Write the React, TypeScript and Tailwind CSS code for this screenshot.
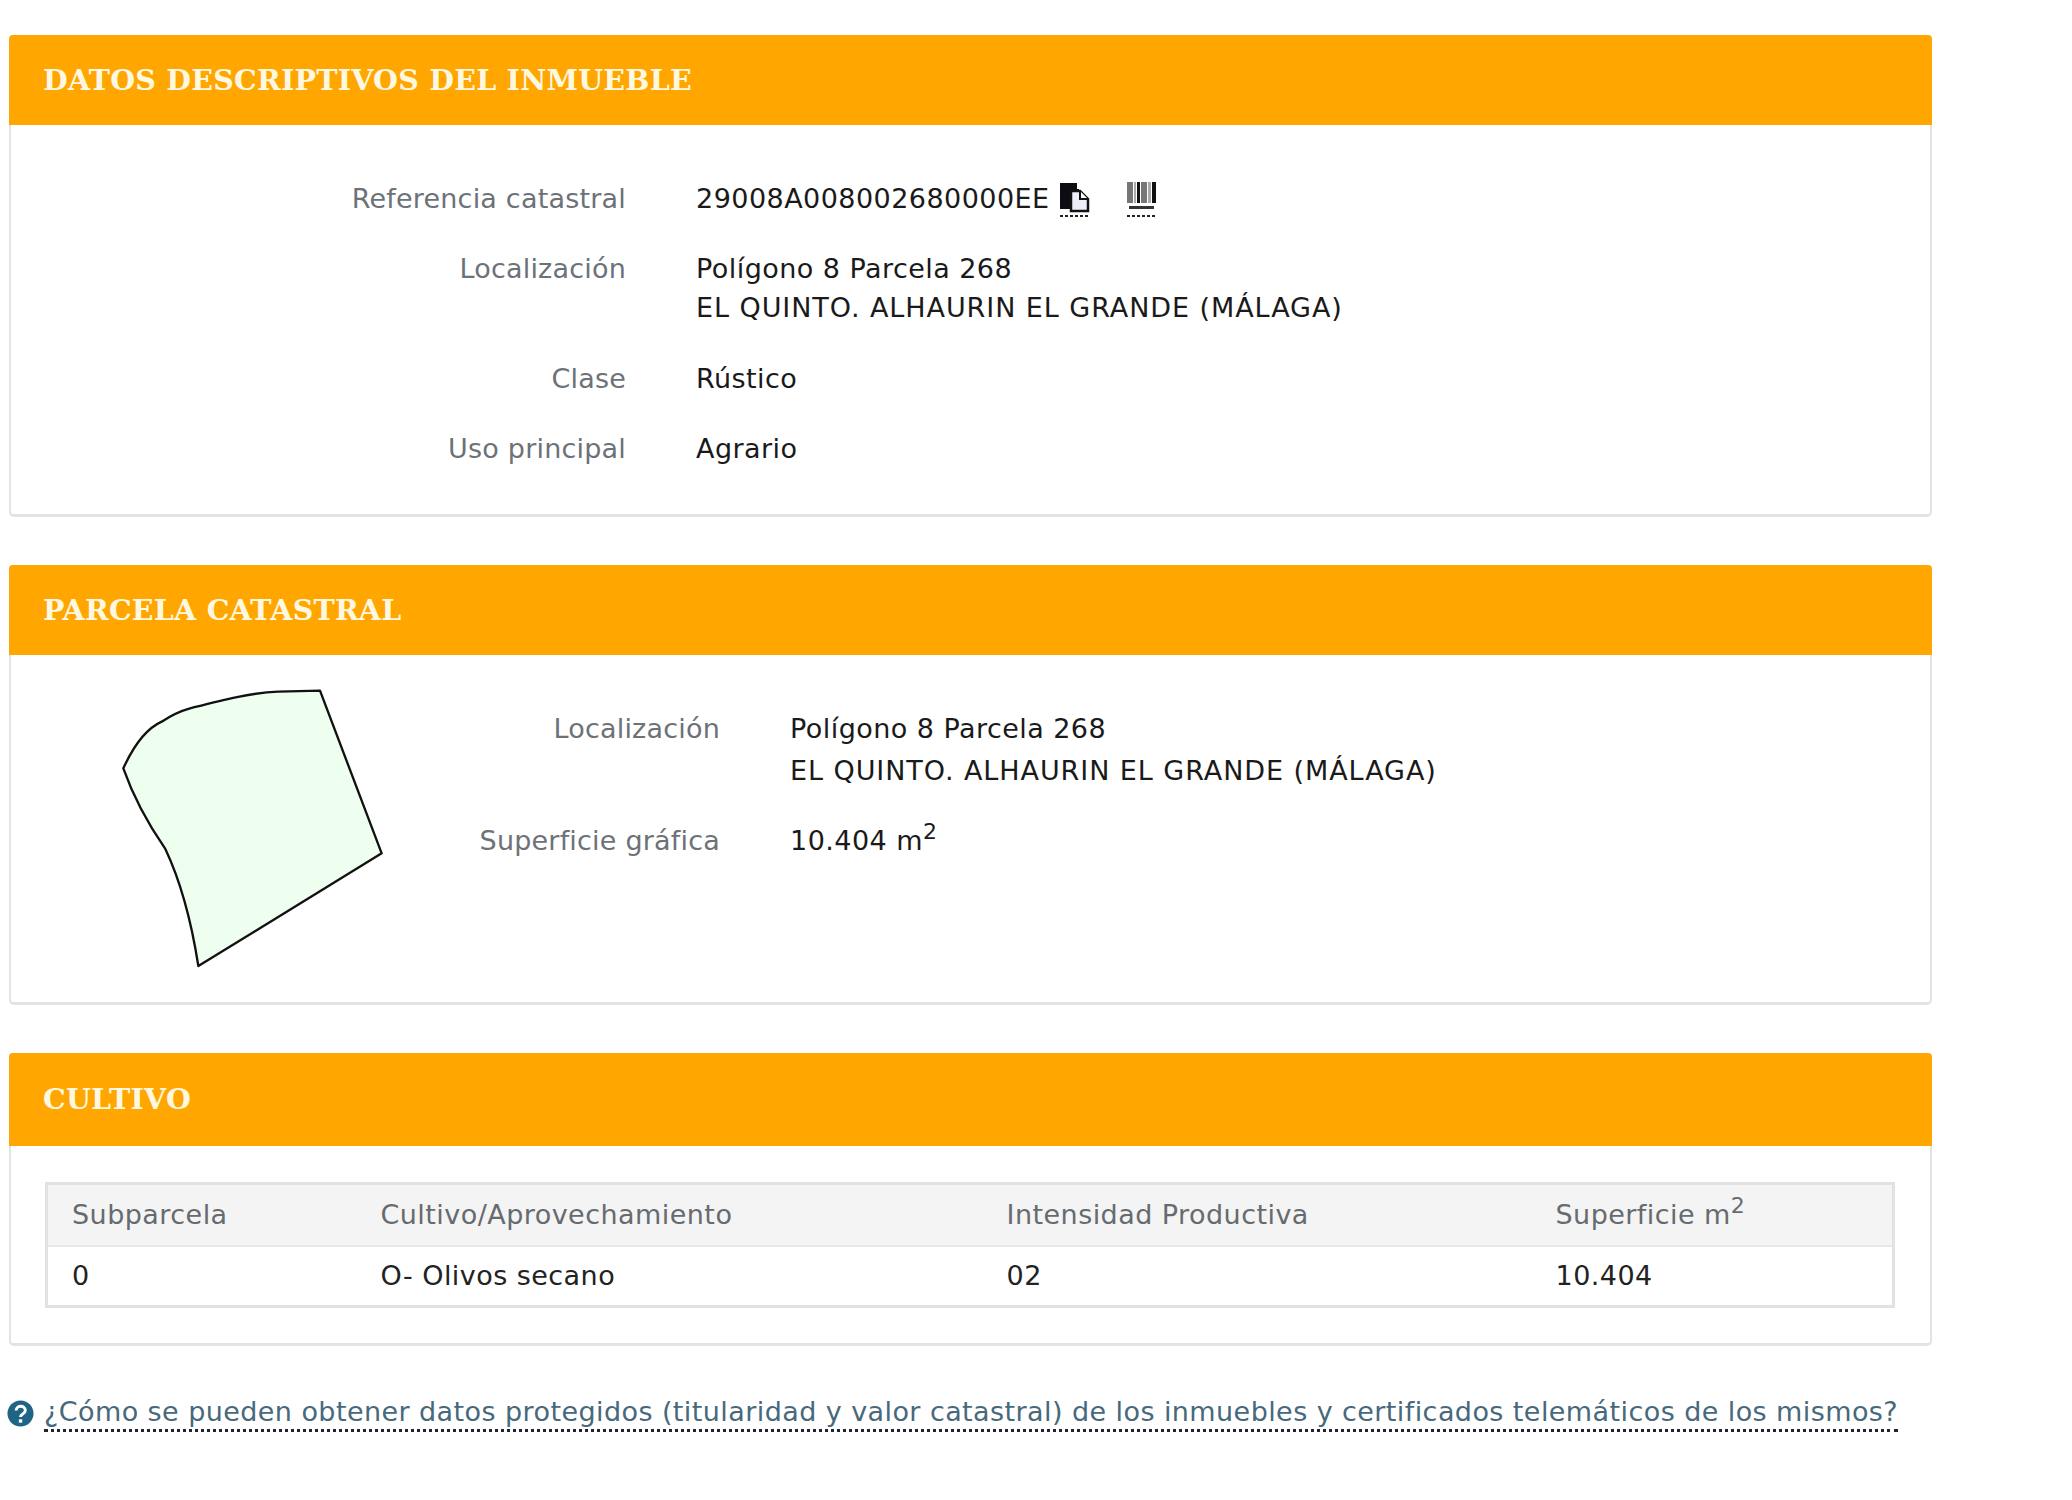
const font = { fontFamily: '"DejaVu Sans", sans-serif' };

function Header({ title, tall }: { title: string; tall?: boolean }) {
  return (
    <div className={`flex items-center rounded-t-[4px] bg-[#ffa700] pl-[34px] ${tall ? "h-[93px]" : "h-[90px]"}`}>
      <h2 className="text-[28.5px] font-bold leading-none tracking-[0.25px] text-[#fff8e0] [font-family:'DejaVu_Serif',serif]">{title}</h2>
    </div>
  );
}

function CopyIcon() {
  return (
    <svg width="32" height="36" viewBox="0 0 32 36" className="ml-[9px] mt-[3px]">
      <path d="M1 1h17v6h2l-0 20H1z" fill="#0c0c12" />
      <path d="M12 9h9l8 8v12H12z" fill="#eeeef8" stroke="#111" strokeWidth="2.5" />
      <path d="M21 9v8h8" fill="#fff" stroke="#111" strokeWidth="2" />
      <path d="M1 34h30" stroke="#222" strokeWidth="2" strokeDasharray="3 2" />
    </svg>
  );
}

function BarcodeIcon() {
  return (
    <svg width="32" height="36" viewBox="0 0 32 36" className="ml-[35px] mt-[3px]">
      <rect x="1" y="0" width="6" height="21" fill="#777" />
      <rect x="8" y="0" width="2" height="21" fill="#aaa" />
      <rect x="11" y="0" width="3" height="21" fill="#111" />
      <rect x="15" y="0" width="6" height="21" fill="#777" />
      <rect x="22" y="0" width="3" height="21" fill="#aaa" />
      <rect x="26" y="0" width="4" height="21" fill="#111" />
      <rect x="3" y="24" width="25" height="3" fill="#333" />
      <path d="M1 34h30" stroke="#222" strokeWidth="2" strokeDasharray="3 2" />
    </svg>
  );
}

function Row({ label, w, children, extra }: { label: string; w: string; children: React.ReactNode; extra?: string }) {
  return (
    <div className={`flex ${extra ?? ""}`}>
      <div className={`${w} shrink-0 text-right tracking-[0.2px] text-[#6c7278]`}>{label}</div>
      <div className="ml-[70px] tracking-[0.45px] text-[#1a1a1a]">{children}</div>
    </div>
  );
}

function Address() {
  return (
    <>
      Polígono 8 Parcela 268
      <br />
      <span className="tracking-[0.93px]">EL QUINTO. ALHAURIN EL GRANDE (MÁLAGA)</span>
    </>
  );
}

export default function App() {
  const head = "text-[#666b70]";
  return (
    <div className="min-h-[1500px] bg-white pl-[9px] pt-[35px] text-[27px]" style={font}>
      <div className="w-[1923px]">
        <section className="h-[482px] rounded-[5px] border-x-2 border-b-[3px] border-[#e3e3e3]">
          <div className="mx-[-2px]"><Header title="DATOS DESCRIPTIVOS DEL INMUEBLE" /></div>
          <div className="flex flex-col gap-[31px] pt-[54px] leading-[39px]">
            <Row label="Referencia catastral" w="w-[615px]">
              <div className="flex items-center">
                <span>29008A008002680000EE</span>
                <CopyIcon />
                <BarcodeIcon />
              </div>
            </Row>
            <Row label="Localización" w="w-[615px]">
              <Address />
            </Row>
            <Row label="Clase" w="w-[615px]" extra="mt-[1px]">Rústico</Row>
            <Row label="Uso principal" w="w-[615px]">Agrario</Row>
          </div>
        </section>

        <section className="mt-[48px] h-[440px] rounded-[5px] border-x-2 border-b-[3px] border-[#e3e3e3]">
          <div className="mx-[-2px]"><Header title="PARCELA CATASTRAL" /></div>
          <div className="flex">
            <svg width="320" height="320" viewBox="0 0 960 960" className="ml-[79px] mt-[15px] shrink-0">
              <path
                d="M690 62L875 550L325 888C305 760 275 640 225 535C180 470 130 380 100 295C125 240 160 180 215 155C245 135 275 122 300 115C390 92 480 68 565 65Z"
                fill="#efffef"
                stroke="#111"
                strokeWidth="7"
                strokeLinejoin="round"
              />
            </svg>
            <div className="flex flex-col gap-[28px] pt-[53px] leading-[42px]">
              <Row label="Localización" w="w-[310px]">
                <Address />
              </Row>
              <Row label="Superficie gráfica" w="w-[310px]">
                10.404 m<sup className="text-[22px]">2</sup>
              </Row>
            </div>
          </div>
        </section>

        <section className="mt-[48px] h-[293px] rounded-[5px] border-x-2 border-b-[3px] border-[#e3e3e3]">
          <div className="mx-[-2px]"><Header title="CULTIVO" tall /></div>
          <div className="pl-[34px] pt-[36px]">
            <table className="w-[1850px] table-fixed border-collapse border-[3px] border-[#e2e2e2] text-left tracking-[0.45px]">
              <colgroup>
                <col className="w-[310px]" />
                <col className="w-[626px]" />
                <col className="w-[549px]" />
                <col />
              </colgroup>
              <thead>
                <tr className={`h-[62px] border-b-2 border-[#e8e8e8] bg-[#f4f4f4] ${head}`}>
                  <th className="pl-[24px] font-normal">Subparcela</th>
                  <th className="pl-[24px] font-normal">Cultivo/Aprovechamiento</th>
                  <th className="pl-[24px] font-normal">Intensidad Productiva</th>
                  <th className="pl-[24px] font-normal">Superficie m<sup className="text-[22px]">2</sup></th>
                </tr>
              </thead>
              <tbody>
                <tr className="h-[61px] text-[#222]">
                  <td className="pl-[24px]">0</td>
                  <td className="pl-[24px]">O- Olivos secano</td>
                  <td className="pl-[24px]">02</td>
                  <td className="pl-[24px]">10.404</td>
                </tr>
              </tbody>
            </table>
          </div>
        </section>

        <div className="mt-[48px] ml-[-2px] flex items-center">
          <svg width="27" height="27" viewBox="0 0 28 28" className="shrink-0">
            <circle cx="14" cy="14" r="13.5" fill="#1f6485" />
            <path d="M9.5 11c0-6 9.5-6 9.5 0c0 3.500-5 3.500-5 6.500" fill="none" stroke="#fff" strokeWidth="3" />
            <rect x="12.300" y="20" width="3.500" height="3.500" fill="#fff" />
          </svg>
          <a className="ml-[10px] whitespace-nowrap border-b-[3px] border-dotted border-[#223] leading-[35px] tracking-[0.42px] text-[#47697b]">
            ¿Cómo se pueden obtener datos protegidos (titularidad y valor catastral) de los inmuebles y certificados telemáticos de los mismos?
          </a>
        </div>
      </div>
    </div>
  );
}
